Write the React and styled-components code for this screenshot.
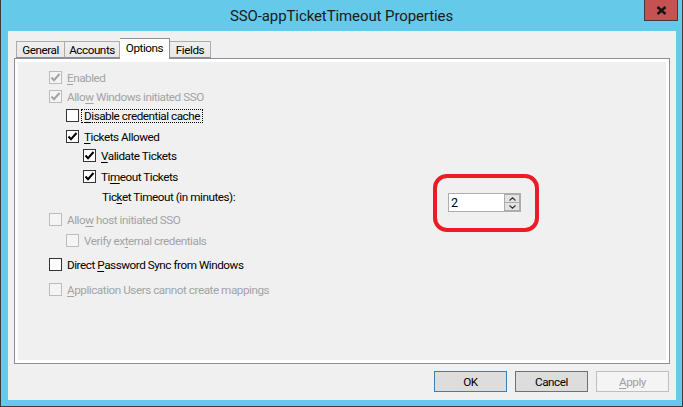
import React from 'react';
import styled, { createGlobalStyle } from 'styled-components';

const colors = {
  frame: '#65c9ea',
  frameEdge: '#3c3c3c',
  face: '#f0f0f0',
  panelBorder: '#8d8f96',
  text: '#000000',
  grayText: '#a3a3a3',
  closeRed: '#c75050',
  annotation: '#ed1c24',
};

const GlobalStyle = createGlobalStyle`
  body {
    margin: 0;
    background: #ffffff;
    font-family: Roboto, "Liberation Sans", sans-serif;
    font-size: 11.7px;
    letter-spacing: -0.45px;
    color: ${colors.text};
  }
`;

const Window = styled.div`
  position: relative;
  width: 683px;
  height: 407px;
  box-sizing: border-box;
  background: ${colors.frame};
  border: 1px solid ${colors.frameEdge};
  border-top: none;
  display: flex;
  flex-direction: column;
  overflow: hidden;
`;

const TitleBar = styled.div`
  height: 31px;
  display: grid;
  grid-template-columns: 1fr auto 1fr;
  align-items: start;
`;

const Title = styled.div`
  grid-column: 2;
  font-size: 15px;
  letter-spacing: -0.1px;
  line-height: 32px;
  color: #1b1b1b;
`;

const CloseButton = styled.div`
  grid-column: 3;
  justify-self: end;
  margin-right: 4px;
  width: 34px;
  height: 21px;
  box-sizing: border-box;
  background: ${colors.closeRed};
  border: 1px solid ${colors.frameEdge};
  border-top: none;
  display: flex;
  align-items: center;
  justify-content: center;
`;

const Client = styled.div`
  flex: 1;
  margin: 0 6px 6px 7px;
  background: ${colors.face};
  padding: 7px 6px 8px 6px;
  display: flex;
  flex-direction: column;
`;

const TabStrip = styled.div`
  display: flex;
  align-items: flex-end;
  height: 20px;
  padding-left: 2px;
  position: relative;
  z-index: 1;
`;

const Tab = styled.div`
  box-sizing: border-box;
  width: ${p => p.$width}px;
  height: ${p => (p.$active ? 21 : 17)}px;
  margin-bottom: ${p => (p.$active ? -1 : 0)}px;
  border: 1px solid ${p => (p.$active ? colors.panelBorder : '#acacac')};
  border-bottom: ${p => (p.$active ? 'none' : `1px solid ${colors.panelBorder}`)};
  background: ${p => (p.$active ? '#ffffff' : 'linear-gradient(#f0f0f0, #e7e7e7)')};
  display: flex;
  align-items: center;
  justify-content: center;
  line-height: 14px;
  padding-bottom: ${p => (p.$active ? 3 : 0)}px;
  & + & {
    border-left: none;
  }
`;

const Panel = styled.div`
  flex: 1;
  border: 1px solid ${colors.panelBorder};
  box-shadow: inset 0 0 0 3px #ffffff;
  padding: 12px 0 0 34px;
  display: flex;
  flex-direction: column;
`;

const Row = styled.div`
  display: flex;
  align-items: center;
  height: 13px;
  margin-top: ${p => p.$top || 0}px;
  margin-left: ${p => (p.$level || 0) * 17}px;
`;

const Box = styled.div`
  width: 13px;
  height: 13px;
  box-sizing: border-box;
  flex: none;
  border: 1px solid ${p => (p.$disabled ? '#bcbcbc' : '#333333')};
  background: ${p => (p.$disabled ? '#f4f4f4' : '#ffffff')};
  display: flex;
  align-items: center;
  justify-content: center;
`;

const Label = styled.span`
  margin-left: 2px;
  padding: 0 2px;
  border: 1px ${p => (p.$focus ? 'dotted #000' : 'solid transparent')};
  line-height: 12px;
  white-space: nowrap;
  color: ${p => (p.$disabled ? colors.grayText : colors.text)};
  u {
    text-decoration-thickness: 1px;
    text-underline-offset: 2px;
  }
`;

const TimeoutRow = styled.div`
  display: flex;
  align-items: flex-start;
  height: 22px;
  margin-top: 7px;
  margin-left: 53px;
`;

const TimeoutLabel = styled.span`
  width: 346px;
  line-height: 14px;
  white-space: nowrap;
  u {
    text-decoration-thickness: 1px;
    text-underline-offset: 2px;
  }
`;

const Spinner = styled.div`
  margin-top: 3px;
  display: flex;
  height: 19px;
  box-sizing: border-box;
  border: 1px solid #abadb3;
`;

const SpinInput = styled.div`
  width: 53px;
  background: #ffffff;
  padding-left: 2px;
  line-height: 17px;
  font-size: 12.5px;
  letter-spacing: 0;
`;

const SpinButtons = styled.div`
  width: 16px;
  background: #acacac;
  padding: 1px;
  box-sizing: border-box;
  display: flex;
  flex-direction: column;
  gap: 1px;
`;

const SpinButton = styled.div`
  flex: 1;
  background: #e4e4e4;
  display: flex;
  align-items: center;
  justify-content: center;
`;

const ButtonRow = styled.div`
  margin-top: 7px;
  height: 21px;
  display: flex;
  justify-content: flex-end;
  gap: 8px;
  padding-right: 1px;
`;

const DialogButton = styled.div`
  width: 73px;
  height: 21px;
  box-sizing: border-box;
  border: 1px solid ${p => (p.$default ? '#3c7fb1' : p.$disabled ? '#bfbfbf' : '#707070')};
  background: ${p => (p.$disabled ? '#f4f4f4' : '#dddddd')};
  color: ${p => (p.$disabled ? '#a0a0a0' : '#000000')};
  display: flex;
  align-items: center;
  justify-content: center;
  u {
    text-decoration-thickness: 1px;
    text-underline-offset: 2px;
  }
`;

const Annotation = styled.div`
  position: absolute;
  left: 432px;
  top: 174px;
  width: 106px;
  height: 58px;
  box-sizing: border-box;
  border: 4px solid ${colors.annotation};
  border-radius: 14px;
  pointer-events: none;
`;

const Check = ({ color }) => (
  <svg width="11" height="11" viewBox="0 0 11 11">
    <path d="M1.5 5.5 L4 8.2 L9.5 2" fill="none" stroke={color} strokeWidth="2" />
  </svg>
);

const CheckRow = ({ checked, disabled, focus, level, top, children }) => (
  <Row $level={level} $top={top}>
    <Box $disabled={disabled}>
      {checked ? <Check color={disabled ? '#a3a3a3' : '#000'} /> : null}
    </Box>
    <Label $disabled={disabled} $focus={focus}>{children}</Label>
  </Row>
);

const Arrow = ({ up }) => (
  <svg width="7" height="4" viewBox="0 0 7 4">
    <path d={up ? 'M0.5 3.5 L3.5 0.8 L6.5 3.5' : 'M0.5 0.5 L3.5 3.2 L6.5 0.5'} fill="none" stroke="#333" strokeWidth="1.2" />
  </svg>
);

const tabs = [
  { name: 'General', width: 49 },
  { name: 'Accounts', width: 55 },
  { name: 'Options', width: 50, active: true },
  { name: 'Fields', width: 41 },
];

export default function App() {
  return (
    <>
      <GlobalStyle />
      <Window>
        <TitleBar>
          <Title>SSO-appTicketTimeout Properties</Title>
          <CloseButton>
            <svg width="11" height="9" viewBox="0 0 11 9">
              <path d="M1.5 1 L9.5 8 M9.5 1 L1.5 8" stroke="#141414" strokeWidth="2.4" />
            </svg>
          </CloseButton>
        </TitleBar>
        <Client>
          <TabStrip>
            {tabs.map(t => (
              <Tab key={t.name} $width={t.width} $active={t.active}>{t.name}</Tab>
            ))}
          </TabStrip>
          <Panel>
            <CheckRow checked disabled><u>E</u>nabled</CheckRow>
            <CheckRow checked disabled top={6}>Allo<u>w</u> Windows initiated SSO</CheckRow>
            <CheckRow level={1} top={6} focus><u>D</u>isable credential cache</CheckRow>
            <CheckRow level={1} top={8} checked><u>T</u>ickets Allowed</CheckRow>
            <CheckRow level={2} top={6} checked><u>V</u>alidate Tickets</CheckRow>
            <CheckRow level={2} top={8} checked>Ti<u>m</u>eout Tickets</CheckRow>
            <TimeoutRow>
              <TimeoutLabel>Tic<u>k</u>et Timeout (in minutes):</TimeoutLabel>
              <Spinner>
                <SpinInput>2</SpinInput>
                <SpinButtons>
                  <SpinButton><Arrow up /></SpinButton>
                  <SpinButton><Arrow /></SpinButton>
                </SpinButtons>
              </Spinner>
            </TimeoutRow>
            <CheckRow disabled top={1}>Allo<u>w</u> host initiated SSO</CheckRow>
            <CheckRow disabled level={1} top={8}>Verify ex<u>t</u>ernal credentials</CheckRow>
            <CheckRow top={11}>Direct <u>P</u>assword Sync from Windows</CheckRow>
            <CheckRow disabled top={12}><u>A</u>pplication Users cannot create mappings</CheckRow>
          </Panel>
          <ButtonRow>
            <DialogButton $default>OK</DialogButton>
            <DialogButton>Cancel</DialogButton>
            <DialogButton $disabled><u>A</u>pply</DialogButton>
          </ButtonRow>
        </Client>
        <Annotation />
      </Window>
    </>
  );
}
